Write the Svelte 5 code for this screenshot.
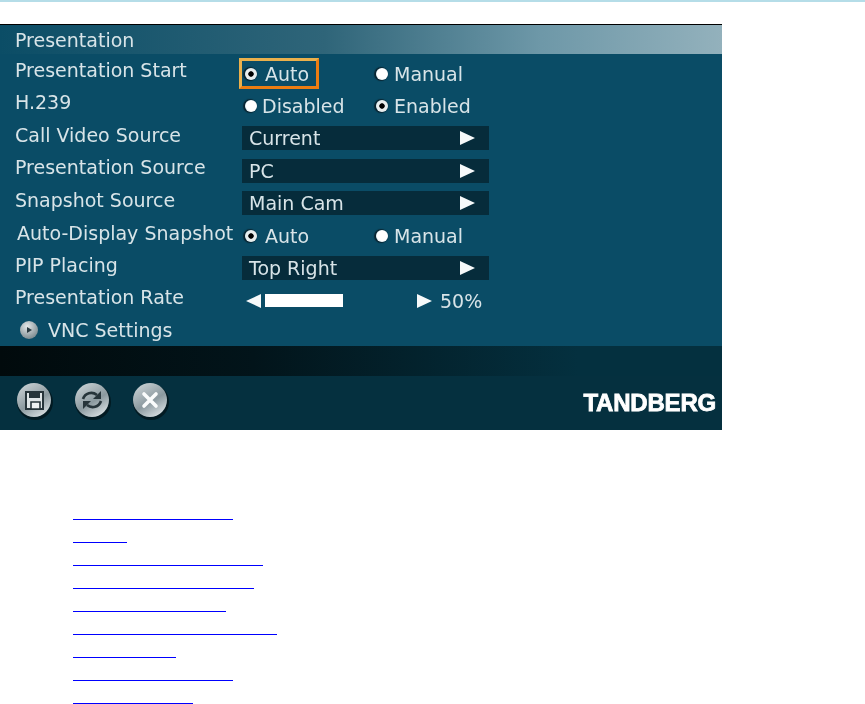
<script>
    const links = [160, 54, 190, 181, 153, 204, 103, 160, 120];
</script>

<div class="topline"></div>

<div class="panel">
    <div class="title">Presentation</div>

    <div class="body">
        <div class="row">
            <div class="label">Presentation Start</div>
            <div class="radios">
                <div class="radio first focused"><span class="dot on"></span><span class="wide">Auto</span></div>
                <div class="radio"><span class="dot"></span>Manual</div>
            </div>
        </div>
        <div class="row">
            <div class="label">H.239</div>
            <div class="radios">
                <div class="radio first"><span class="dot"></span>Disabled</div>
                <div class="radio"><span class="dot on"></span>Enabled</div>
            </div>
        </div>
        <div class="row">
            <div class="label">Call Video Source</div>
            <div class="select">Current<span class="arrow"></span></div>
        </div>
        <div class="row">
            <div class="label">Presentation Source</div>
            <div class="select">PC<span class="arrow"></span></div>
        </div>
        <div class="row">
            <div class="label">Snapshot Source</div>
            <div class="select">Main Cam<span class="arrow"></span></div>
        </div>
        <div class="row">
            <div class="label nudge">Auto-Display Snapshot</div>
            <div class="radios">
                <div class="radio first"><span class="dot on"></span><span class="wide">Auto</span></div>
                <div class="radio"><span class="dot"></span>Manual</div>
            </div>
        </div>
        <div class="row">
            <div class="label">PIP Placing</div>
            <div class="select">Top Right<span class="arrow"></span></div>
        </div>
        <div class="row">
            <div class="label">Presentation Rate</div>
            <div class="slider">
                <span class="arrow left"></span>
                <span class="bar"></span>
                <span class="arrow right"></span>
                <span class="pct">50%</span>
            </div>
        </div>
        <div class="row vnc">
            <svg class="play" width="20" height="20" viewBox="0 0 20 20">
                <defs>
                    <radialGradient id="playfill" cx="0.4" cy="0.3" r="0.8">
                        <stop offset="0" stop-color="#e4e8e9" />
                        <stop offset="1" stop-color="#6f7f85" />
                    </radialGradient>
                </defs>
                <circle cx="10" cy="10" r="9" fill="url(#playfill)" />
                <path d="M8 7l5 3-5 3z" fill="#2a3a40" />
            </svg>
            <span>VNC Settings</span>
        </div>
    </div>

    <div class="band"></div>

    <div class="footer">
        <div class="buttons">
            <svg class="btn" width="38" height="38" viewBox="0 0 38 38">
                <defs>
                    <linearGradient id="metal" x1="0.2" y1="0" x2="0.8" y2="1">
                        <stop offset="0" stop-color="#c9d1d4" />
                        <stop offset="0.55" stop-color="#8b999f" />
                        <stop offset="1" stop-color="#dfe5e7" />
                    </linearGradient>
                </defs>
                <circle cx="19" cy="20" r="18" fill="#021a22" />
                <circle cx="18" cy="18" r="17" fill="url(#metal)" />
                <path d="M10 10h17v17H10z" fill="#dfe5e7" stroke="#26343a" stroke-width="2" />
                <path d="M13 9h11v7H13z" fill="#26343a" />
                <path d="M15 20h9v7h-9z" fill="#eef2f3" stroke="#26343a" stroke-width="1.6" />
            </svg>
            <svg class="btn" width="38" height="38" viewBox="0 0 38 38">
                <circle cx="19" cy="20" r="18" fill="#021a22" />
                <circle cx="18" cy="18" r="17" fill="url(#metal)" />
                <path d="M9 17c2-6 9-8 14-4" fill="none" stroke="#26343a" stroke-width="2.6" />
                <path d="M27 9v8h-8z" fill="#26343a" />
                <path d="M27 19c-2 6-9 8-14 4" fill="none" stroke="#26343a" stroke-width="2.6" />
                <path d="M9 27v-8h8z" fill="#26343a" />
            </svg>
            <svg class="btn" width="38" height="38" viewBox="0 0 38 38">
                <circle cx="19" cy="20" r="18" fill="#021a22" />
                <circle cx="18" cy="18" r="17" fill="url(#metal)" />
                <path d="M12 12l12 12M24 12L12 24" stroke="#fafcfc" stroke-width="3.6" stroke-linecap="round" />
            </svg>
        </div>
        <div class="logo">TANDBERG</div>
    </div>
</div>

<ul class="links">
    {#each links as w}
        <li><a href="#top" style="width: {w}px" aria-label="link"></a></li>
    {/each}
</ul>

<style>
    :global(body) {
        background: #fff;
    }

    .topline {
        height: 2px;
        background: #b5dde8;
    }

    .panel {
        width: 722px;
        height: 406px;
        margin-top: 22px;
        display: flex;
        flex-direction: column;
        background: #0a4c66;
        color: #d8e4e8;
        font-family: "DejaVu Sans", sans-serif;
        font-size: 19px;
    }

    .title {
        height: 30px;
        flex: none;
        box-sizing: border-box;
        border-top: 1px solid #000;
        padding-left: 15px;
        line-height: 30px;
        background: linear-gradient(90deg, #0b4d66 0%, #2f6579 45%, #6e98a8 75%, #93b1bc 100%);
        filter: blur(0.4px);
    }

    .body {
        flex: 1;
        min-height: 0;
        padding-top: 3px;
        filter: blur(0.4px);
    }

    .row {
        height: 32.5px;
        display: flex;
        align-items: center;
        white-space: nowrap;
    }

    .label {
        width: 227px;
        padding-left: 15px;
        padding-bottom: 7px;
        flex: none;
    }

    .label.nudge {
        padding-left: 17px;
        width: 225px;
        padding-bottom: 6px;
    }

    .radios {
        display: flex;
        align-items: center;
        padding-top: 1px;
    }

    .radio {
        display: flex;
        align-items: center;
        gap: 5px;
        width: 124px;
        height: 32px;
        box-sizing: border-box;
        padding-left: 3px;
    }

    .radio + .radio {
        gap: 6px;
        padding-left: 10px;
    }

    .wide {
        margin-left: 3px;
    }

    .focused {
        position: relative;
    }

    .focused::before {
        content: "";
        position: absolute;
        left: -3px;
        top: 0;
        width: 80px;
        height: 31px;
        box-sizing: border-box;
        border: 3px solid #ec7d12;
        border-top-color: #eab04c;
        border-left-color: #eab04c;
    }

    .dot {
        width: 12px;
        height: 12px;
        flex: none;
        border-radius: 50%;
        background: radial-gradient(circle at 55% 45%, #fff 55%, #c9d3d6 100%);
        box-shadow: -1px 0 1px 1px #0a2430;
    }

    .dot.on {
        background: radial-gradient(circle at 50% 50%, #000 0 28%, #e8eded 36% 70%, #9aa5a8 100%);
    }

    .select {
        width: 247px;
        height: 24px;
        display: flex;
        align-items: center;
        justify-content: space-between;
        box-sizing: border-box;
        padding: 0 14px 0 7px;
        background: #062c3b;
    }

    .arrow {
        width: 0;
        height: 0;
        border-style: solid;
        border-color: transparent;
        border-width: 7.5px 0 7.5px 15px;
        border-left-color: #f6f9fa;
    }

    .slider {
        display: flex;
        align-items: center;
        margin-left: 4px;
    }

    .arrow.left {
        border-width: 7.5px 15px 7.5px 0;
        border-right-color: #f6f9fa;
        border-left-color: transparent;
    }

    .bar {
        width: 78px;
        height: 13px;
        margin-left: 4px;
        background: #fff;
    }

    .arrow.right {
        margin-left: 74px;
    }

    .pct {
        margin-left: 8px;
    }

    .vnc {
        gap: 9px;
        padding-left: 19px;
        box-sizing: border-box;
        padding-bottom: 7px;
    }

    .band {
        height: 30px;
        flex: none;
        background: linear-gradient(90deg, #010a0c 0%, #02141a 35%, #04303f 80%);
    }

    .footer {
        height: 54px;
        flex: none;
        box-sizing: border-box;
        display: flex;
        align-items: center;
        justify-content: space-between;
        background: #05303f;
        padding: 0 6px 5px 16px;
    }

    .buttons {
        display: flex;
        gap: 20px;
        filter: blur(0.5px);
    }

    .logo {
        font-family: "Liberation Sans", sans-serif;
        font-weight: 700;
        font-size: 24px;
        letter-spacing: -0.2px;
        color: #fff;
        -webkit-text-stroke: 0.8px #fff;
        margin-top: 5px;
        filter: blur(0.4px);
    }

    .links {
        list-style: none;
        margin: 0;
        padding: 68px 0 0 73px;
    }

    .links li {
        height: 23px;
    }

    .links a {
        display: block;
        height: 22px;
        box-sizing: border-box;
        border-bottom: 1px solid #00f;
    }
</style>
